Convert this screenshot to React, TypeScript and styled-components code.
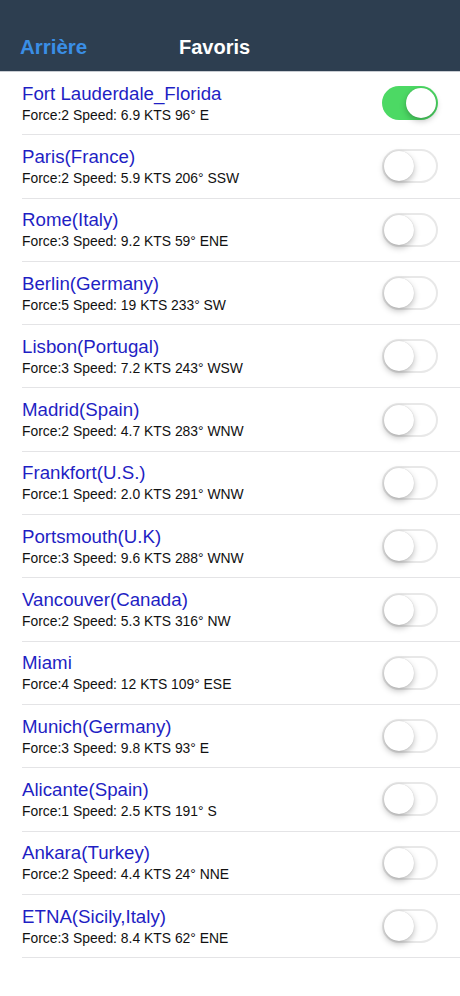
import React, { useState } from 'react';
import styled, { createGlobalStyle } from 'styled-components';

const GlobalStyle = createGlobalStyle`
  body {
    margin: 0;
    background: #ffffff;
    font-family: "Liberation Sans", Arial, sans-serif;
  }
`;

const places = [
  { name: 'Fort Lauderdale_Florida', info: 'Force:2 Speed: 6.9 KTS 96° E', on: true },
  { name: 'Paris(France)', info: 'Force:2 Speed: 5.9 KTS 206° SSW' },
  { name: 'Rome(Italy)', info: 'Force:3 Speed: 9.2 KTS 59° ENE' },
  { name: 'Berlin(Germany)', info: 'Force:5 Speed: 19 KTS 233° SW' },
  { name: 'Lisbon(Portugal)', info: 'Force:3 Speed: 7.2 KTS 243° WSW' },
  { name: 'Madrid(Spain)', info: 'Force:2 Speed: 4.7 KTS 283° WNW' },
  { name: 'Frankfort(U.S.)', info: 'Force:1 Speed: 2.0 KTS 291° WNW' },
  { name: 'Portsmouth(U.K)', info: 'Force:3 Speed: 9.6 KTS 288° WNW' },
  { name: 'Vancouver(Canada)', info: 'Force:2 Speed: 5.3 KTS 316° NW' },
  { name: 'Miami', info: 'Force:4 Speed: 12 KTS 109° ESE' },
  { name: 'Munich(Germany)', info: 'Force:3 Speed: 9.8 KTS 93° E' },
  { name: 'Alicante(Spain)', info: 'Force:1 Speed: 2.5 KTS 191° S' },
  { name: 'Ankara(Turkey)', info: 'Force:2 Speed: 4.4 KTS 24° NNE' },
  { name: 'ETNA(Sicily,Italy)', info: 'Force:3 Speed: 8.4 KTS 62° ENE' },
];

const App = () => {
  const [favs, setFavs] = useState(places.map((p) => !!p.on));

  const toggle = (i: number) => {
    setFavs((prev) => prev.map((v, j) => (j === i ? !v : v)));
  };

  return (
    <>
      <GlobalStyle />
      <Page>
        <NavBar>
          <BackLink>Arrière</BackLink>
          <Title>Favoris</Title>
        </NavBar>
        <List>
          {places.map((p, i) => (
            <Row key={p.name}>
              <TextBlock>
                <PlaceName>{p.name}</PlaceName>
                <WindInfo>{p.info}</WindInfo>
              </TextBlock>
              <Switch $on={favs[i]} onClick={() => toggle(i)}>
                <Knob $on={favs[i]} />
              </Switch>
            </Row>
          ))}
        </List>
      </Page>
    </>
  );
};

const Page = styled.div`
  width: 460px;
  min-height: 996px;
  background: #ffffff;
`;

const NavBar = styled.div`
  height: 72px;
  background: #2d3e50;
  display: flex;
  align-items: flex-end;
  padding: 0 0 12px 20px;
  box-sizing: border-box;
  border-bottom: 1px solid #c8ccd2;
`;

const BackLink = styled.a`
  color: #3a8ee6;
  font-size: 20.5px;
  font-weight: 700;
  width: 159px;
  cursor: pointer;
`;

const Title = styled.div`
  color: #ffffff;
  font-size: 20px;
  font-weight: 700;
`;

const List = styled.div`
  display: flex;
  flex-direction: column;
`;

const Row = styled.div`
  height: 63.3px;
  margin-left: 22px;
  padding-right: 22px;
  box-sizing: border-box;
  border-bottom: 1px solid #e4e4e6;
  display: flex;
  align-items: center;
  justify-content: space-between;
`;

const TextBlock = styled.div`
  display: flex;
  flex-direction: column;
  gap: 3px;
`;

const PlaceName = styled.div`
  color: #1f1fc4;
  font-size: 18.7px;
  line-height: 21px;
`;

const WindInfo = styled.div`
  color: #111111;
  font-size: 13.9px;
  line-height: 17px;
`;

const Switch = styled.div<{ $on: boolean }>`
  position: relative;
  width: 56px;
  height: 34px;
  border-radius: 17px;
  box-sizing: border-box;
  background: ${(p) => (p.$on ? '#4cd964' : '#ffffff')};
  border: ${(p) => (p.$on ? 'none' : '2px solid #e8e8e8')};
  cursor: pointer;
  flex-shrink: 0;
`;

const Knob = styled.div<{ $on: boolean }>`
  position: absolute;
  top: ${(p) => (p.$on ? '2px' : '0')};
  left: ${(p) => (p.$on ? '24px' : '0')};
  width: 30px;
  height: 30px;
  border-radius: 50%;
  background: #ffffff;
  box-shadow: 0 3px 6px rgba(0, 0, 0, 0.25), 0 0 1px rgba(0, 0, 0, 0.2);
`;

export default App;
